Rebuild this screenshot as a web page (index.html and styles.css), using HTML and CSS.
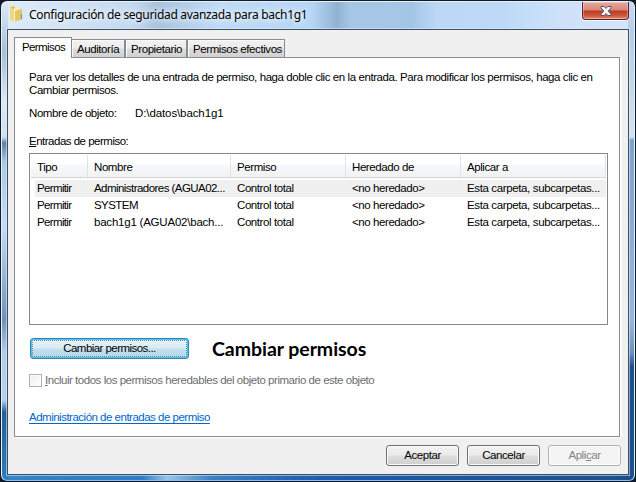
FILE: index.html
```html
<!DOCTYPE html>
<html lang="es">
<head>
<meta charset="utf-8">
<title>Configuración de seguridad avanzada</title>
<link rel="stylesheet" href="styles.css">
</head>
<body>
<div class="window">
  <header class="titlebar">
    <svg class="folder" width="14" height="16" viewBox="0 0 14 16">
      <path d="M1 1 6 .3V14l-5-1z" fill="#e0bd55"/>
      <path d="M5 2.5 10 1v12l-4 2z" fill="#f9ebab"/>
      <path d="M1 1 5 3v12.5l-4-2z" fill="#f0d67c"/>
      <path d="M6 5 13 3v10.500l-7 2z" fill="#e6c560"/>
      <path d="M5.500 3V15.500" stroke="#fff6c9"/>
      <path d="M12.500 8v5" stroke="#4aa3d8" stroke-width="1.200"/>
    </svg>
    <h1 class="title">Configuración de seguridad avanzada para bach1g1</h1>
    <button class="close" aria-label="Cerrar">
      <svg width="12" height="10" viewBox="0 0 12 10">
        <path d="M1 .5h3.200L6 2.400 7.800.5H11v1.400L8.200 5 11 8.100v1.400H7.800L6 7.600 4.200 9.500H1V8.100L3.800 5 1 1.900z" fill="#f7f7f7" stroke="#535666" stroke-width="1"/>
      </svg>
    </button>
  </header>
  <main class="client">
    <nav class="tabs">
      <span class="tab active">Permisos</span>
      <span class="tab auditoria">Auditoría</span>
      <span class="tab propietario">Propietario</span>
      <span class="tab efectivos">Permisos efectivos</span>
    </nav>
    <section class="panel">
      <p class="intro">Para ver los detalles de una entrada de permiso, haga doble clic en la entrada. Para modificar los permisos, haga clic en<br>Cambiar permisos.</p>
      <p class="object"><span class="label">Nombre de objeto:</span><span class="path">D:\datos\bach1g1</span></p>
      <p class="caption"><u>E</u>ntradas de permiso:</p>
      <div class="list">
        <div class="row head"><span>Tipo</span><span>Nombre</span><span>Permiso</span><span>Heredado de</span><span>Aplicar a</span></div>
        <div class="row selected"><span class="type">Permitir</span><span class="name">Administradores (AGUA02...</span><span>Control total</span><span>&lt;no heredado&gt;</span><span class="scope">Esta carpeta, subcarpetas...</span></div>
        <div class="row"><span class="type">Permitir</span><span class="name">SYSTEM</span><span>Control total</span><span>&lt;no heredado&gt;</span><span class="scope">Esta carpeta, subcarpetas...</span></div>
        <div class="row"><span class="type">Permitir</span><span class="account">bach1g1 (AGUA02\bach...</span><span>Control total</span><span>&lt;no heredado&gt;</span><span class="scope">Esta carpeta, subcarpetas...</span></div>
      </div>
      <div class="change">
        <button class="btn primary">Cambiar permisos...</button>
        <strong class="note">Cambiar permisos</strong>
      </div>
      <div class="inherit"><span class="box"></span><span><u>I</u>ncluir todos los permisos heredables del objeto primario de este objeto</span></div>
      <a class="link">Administración de entradas de permiso</a>
    </section>
    <footer class="actions">
      <button class="btn">Aceptar</button>
      <button class="btn">Cancelar</button>
      <button class="btn disabled">Apli<u>c</u>ar</button>
    </footer>
  </main>
</div>
</body>
</html>
```
FILE: styles.css
```css
* { box-sizing: border-box; }
body {
  margin: 0;
  width: 636px;
  height: 482px;
  overflow: hidden;
  background: #111a2b;
  padding: 1px 1px 0 1px;
  font: 11.5px/13px "Liberation Sans", Arial, sans-serif;
  letter-spacing: -0.42px;
  color: #000;
  white-space: nowrap;
}
p, h1 { margin: 0; }
u { text-underline-offset: 1px; }
.window {
  width: 634px;
  height: 480px;
  border: 1px solid #e6f2fb;
  border-bottom-color: #8fbbe0;
  border-radius: 6px;
  padding: 0 5px;
  background:
    linear-gradient(#c8dcf2, #b5cde6 30px, #d5e2ef 135px, #7fa4d0 138px, #96b6dd 320px, #6d93c4 350px, #1c4f8c 365px, #1d518d) right 0 / 6px 100% no-repeat,
    linear-gradient(#dceafa, #a8bfd6 50px, #dce9f5 100px, #cfe0f2 135px, #5e7fa8 141px, #a9c8e9 160px, #c4dcf5 225px, #6e92bd 318px, #b0cdec 350px, #b5d1ef 398px, #236098 410px, #2e7dc0) left 0 / 6px 100% no-repeat,
    linear-gradient(90deg, #3384c8, #2e7cc3 140px, #9ac5ec 165px, #3a80c6 210px, #1c5dae 320px, #1c4f8c) left bottom / 100% 7px no-repeat,
    linear-gradient(90deg, #dfebfa 0, #c3d9f0 130px, #a9c3de 155px, #bedbf5 215px, #b6d6f5 310px, #91b2d2 335px, #a6c6e5 348px, #a4c6e6 410px, #bbd8f6 435px, #bcdaf8 500px, #cfe1f9 560px, #d4e5f9);
}
.titlebar {
  height: 27px;
  display: flex;
  align-items: flex-start;
}
.folder { margin: 4px 0 0 2px; flex: none; }
.title {
  margin: 4px 0 0 6px;
  font: 12px/17px "Noto Sans", sans-serif;
  letter-spacing: -0.31px;
  text-shadow: 0 0 6px #fff, 0 0 8px #fff;
}
.close {
  margin-left: auto;
  width: 47px;
  height: 18px;
  border: 1px solid #5c2026;
  border-top: 0;
  border-radius: 0 0 4px 4px;
  padding: 0;
  display: grid;
  place-items: center;
  background: linear-gradient(#e8ab9f, #d98577 8px, #bf3a24 9px, #cf5a3c 14px, #e2957c);
  box-shadow: inset 0 0 0 1px #ffffff50, 0 1px 0 #f0f8ff, -1px 0 0 #e7f2fc;
}
.client {
  width: 622px;
  height: 446px;
  border: 1px solid #3f4f60;
  box-shadow: 0 0 0 1px #d9edfb90;
  background: #f0f0f0;
  padding: 7px 8px 0 6px;
}
.tabs {
  height: 21px;
  display: flex;
  align-items: flex-end;
  position: relative;
}
.tab {
  height: 18px;
  margin-bottom: 1px;
  border: 1px solid #898c95;
  border-bottom: 0;
  padding: 3px 0 0 5px;
  background: linear-gradient(#f2f2f2, #ebebeb 8px, #dddddd 9px, #d0d0d0);
  box-shadow: inset 1px 1px 0 #fafafa;
}
.tab.active {
  width: 58px;
  height: 21px;
  margin: 0;
  padding: 3px 0 0 7px;
  letter-spacing: -0.8px;
  letter-spacing: -0.6px;
  background: #fff;
}
.auditoria { width: 53px; border-left: 0; }
.propietario { width: 62px; }
.efectivos { width: 98px; }
.panel {
  margin-top: -1px;
  width: 606px;
  height: 380px;
  border: 1px solid #898c95;
  box-shadow: 1px 1px 0 #fff, 2px 0 0 #fff;
  background: #fff;
  padding: 13px 0 0 14px;
}
.object { display: flex; margin-top: 10px; }
.label { width: 106px; }
.path { letter-spacing: -0.1px; }
.caption { margin-top: 15px; letter-spacing: -0.5px; }
.list {
  margin-top: 5px;
  width: 579px;
  height: 172px;
  border: 1px solid #828790;
  padding: 1px;
}
.row {
  display: grid;
  grid-template-columns: 57px 143px 115px 115px 1fr;
  height: 17px;
  line-height: 17px;
  margin-left: 4px;
}
.row span { padding-left: 2px; }
.row .type { letter-spacing: -0.65px; }
.row .name { letter-spacing: -0.55px; }
.row .account { letter-spacing: -0.22px; }
.row .scope { letter-spacing: -0.37px; }
.head {
  height: 23px;
  line-height: 24px;
  margin: 0 0 2px;
  border-bottom: 1px solid #d5d5d5;
  background: linear-gradient(#fff 9px, #f7f8fa 10px, #f1f2f4);
}
.row.head span {
  padding-left: 6px;
  border-right: 1px solid #e0e2e5;
}
.head { grid-template-columns: 57px 143px 115px 115px 145px; }
.selected { background: #f0f0f0; }
.change { display: flex; align-items: center; margin: 12px 0 0 1px; height: 23px; }
.btn {
  width: 73px;
  height: 21px;
  border: 1px solid #707070;
  border-radius: 3px;
  padding: 0;
  font: inherit;
  letter-spacing: inherit;
  color: #000;
  background: linear-gradient(#f2f2f2, #ebebeb 9px, #dddddd 10px, #cfcfcf);
  box-shadow: inset 0 0 0 1px #fcfcfc;
}
.primary {
  width: 159px;
  letter-spacing: -0.55px;
  border-color: #3c7fb1;
  background: linear-gradient(#e6f2f8, #d9ebf4 9px, #c5dfec 10px, #b4d5e7);
  box-shadow: inset 0 0 0 1px #45c5ee;
  outline: 1px dotted #4b93ae;
  outline-offset: -3px;
}
.disabled { color: #838383; border-color: #adb2b5; background: #f4f4f4; }
.note {
  margin-left: 23px;
  font: 700 19.5px/22px Lato, sans-serif;
  letter-spacing: -0.05px;
}
.inherit {
  display: flex;
  align-items: center;
  gap: 3px;
  margin-top: 14px;
  letter-spacing: -0.47px;
  color: #6d6d6d;
}
.box {
  width: 13px;
  height: 13px;
  border: 1px solid #b1b1b1;
  background: linear-gradient(135deg, #eee, #fff);
  box-shadow: inset 0 0 0 1px #fafafa;
}
.link {
  display: block;
  width: fit-content;
  margin-top: 24px;
  letter-spacing: -0.5px;
  color: #0066cc;
  text-decoration: underline;
  text-underline-offset: 2px;
}
.actions {
  display: flex;
  justify-content: flex-end;
  gap: 8px;
  margin: 8px -1px 0 0;
}
```
